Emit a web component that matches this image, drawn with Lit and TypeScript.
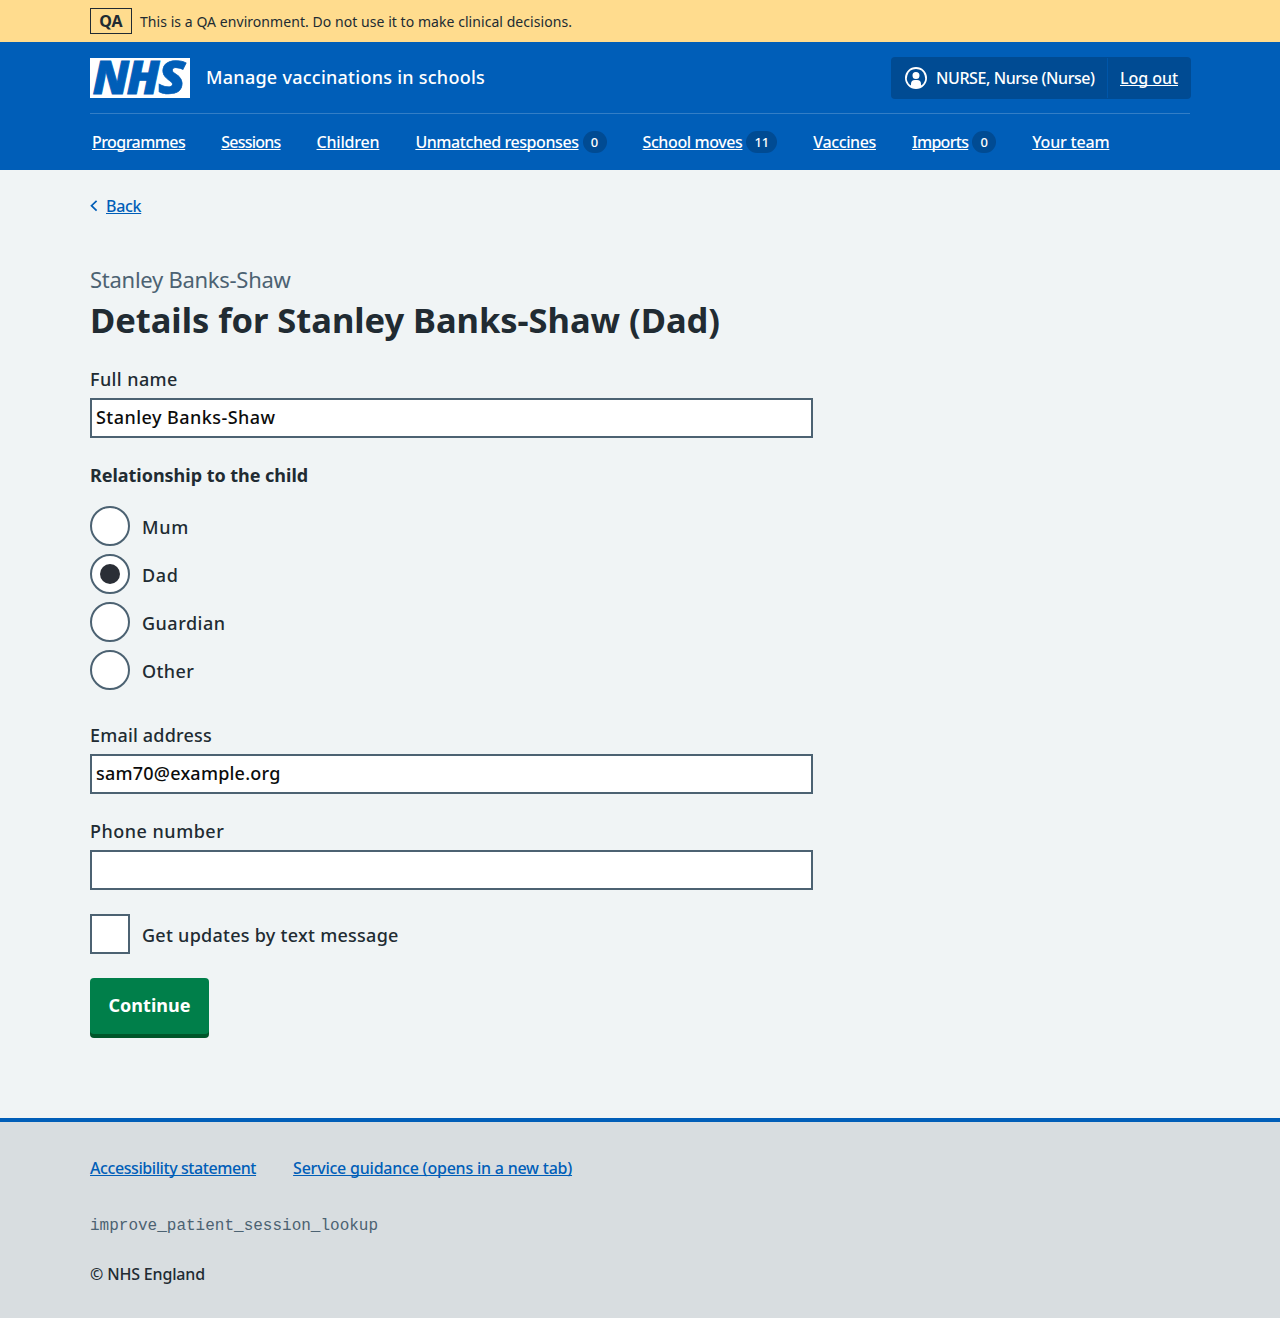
import { LitElement, html, css, nothing } from "lit";
import { customElement, property, state } from "lit/decorators.js";
import { styleMap } from "lit/directives/style-map.js";
import { classMap } from "lit/directives/class-map.js";

interface NavItem {
  label: string;
  tracking: number;
  count?: number;
}

interface Option {
  label: string;
  tracking: number;
}

const NAV: NavItem[] = [
  { label: "Programmes", tracking: -0.56 },
  { label: "Sessions", tracking: -0.76 },
  { label: "Children", tracking: -0.2 },
  { label: "Unmatched responses", tracking: -0.43, count: 0 },
  { label: "School moves", tracking: -0.4, count: 11 },
  { label: "Vaccines", tracking: -0.38 },
  { label: "Imports", tracking: -0.7, count: 0 },
  { label: "Your team", tracking: -0.2 },
];

const RELATIONSHIPS: Option[] = [
  { label: "Mum", tracking: 0.7 },
  { label: "Dad", tracking: 0.7 },
  { label: "Guardian", tracking: 0.5 },
  { label: "Other", tracking: 0.4 },
];

const spacing = (px: number) => styleMap({ letterSpacing: `${px}px` });

@customElement("app-banner")
class AppBanner extends LitElement {
  static styles = css`
    :host {
      display: block;
      background: #ffdc8e;
      color: #212b32;
    }
    .inner {
      box-sizing: border-box;
      width: 1100px;
      height: 42px;
      margin: 0 auto;
      display: flex;
      align-items: center;
      gap: 8px;
    }
    .tag {
      box-sizing: border-box;
      width: 42px;
      height: 26px;
      border: 1px solid #212b32;
      font-size: 16px;
      font-weight: 700;
      line-height: 24px;
      text-align: center;
    }
    .message {
      font-size: 14px;
      line-height: 24px;
      letter-spacing: 0.055px;
      padding-top: 2px;
    }
  `;
  render() {
    return html`<div class="inner">
      <strong class="tag">QA</strong>
      <span class="message">This is a QA environment. Do not use it to make clinical decisions.</span>
    </div>`;
  }
}

@customElement("app-header")
class AppHeader extends LitElement {
  static styles = css`
    :host {
      display: block;
      background: #005eb8;
      color: #fff;
      font-weight: 500;
    }
    .inner {
      width: 1100px;
      margin: 0 auto;
    }
    .top {
      height: 71px;
      display: flex;
      align-items: center;
      border-bottom: 1px solid #337ec6;
    }
    .logo {
      display: block;
      width: 100px;
      height: 40px;
      margin-top: 1px;
      overflow: visible;
    }
    .logo text {
      font-family: "Open Sans", "Noto Sans", sans-serif;
      font-weight: 800;
      font-style: italic;
      font-size: 46px;
    }
    .service {
      margin: -1px 0 0 16px;
      font-size: 18px;
      line-height: 28px;
      letter-spacing: 0.26px;
    }
    .account {
      box-sizing: border-box;
      display: flex;
      align-items: stretch;
      width: 300px;
      height: 42px;
      margin: 1px -1px 0 auto;
      padding: 1px 0;
      border-radius: 4px;
      background: #004b93;
      font-size: 16px;
      line-height: 40px;
      white-space: nowrap;
    }
    .user {
      box-sizing: border-box;
      width: 217px;
      display: flex;
      align-items: center;
      gap: 8px;
      padding-left: 13px;
      border-right: 1px solid #0056a9;
      letter-spacing: -0.42px;
    }
    .user svg {
      width: 24px;
      height: 24px;
    }
    a {
      color: inherit;
      text-decoration: underline 1px;
      text-underline-offset: 1px;
      text-decoration-skip-ink: none;
    }
    .logout {
      margin-left: 12px;
      letter-spacing: -0.05px;
    }
    nav {
      height: 56px;
      display: flex;
      align-items: center;
      gap: 36px;
      padding-left: 2px;
      font-size: 16px;
      line-height: 24px;
    }
    .item {
      display: flex;
      align-items: center;
      gap: 4px;
    }
    .count {
      box-sizing: border-box;
      min-width: 24px;
      height: 22px;
      padding: 0 8px;
      border-radius: 11px;
      background: #004b93;
      font-size: 13px;
      line-height: 23px;
      text-align: center;
    }
  `;
  render() {
    return html`<div class="inner">
      <div class="top">
        <svg class="logo" viewBox="0 0 100 40" role="img" fill="#005eb8" stroke="#005eb8">
          <rect width="100" height="40" fill="#fff" stroke="none" />
          <text x="2.8 36.8" y="36.1" stroke-width="0.9">NH</text>
          <text transform="translate(68 36.1) scale(1.1 1)" stroke-width="0.6">S</text>
        </svg>
        <span class="service">Manage vaccinations in schools</span>
        <div class="account">
          <div class="user">
            <svg viewBox="0 0 24 24" fill="#fff">
              <path
                d="M12 1a11 11 0 1 1 0 22 11 11 0 0 1 0-22Zm0 2a9 9 0 0 0-5 16.5V18a4 4 0 0 1 4-4h2a4 4 0 0 1 4 4v1.5A9 9 0 0 0 12 3Zm0 3a3.5 3.5 0 1 1-3.5 3.5A3.4 3.4 0 0 1 12 6Z"
              />
            </svg>
            <span>NURSE, Nurse (Nurse)</span>
          </div>
          <a class="logout">Log out</a>
        </div>
      </div>
      <nav>
        ${NAV.map(
          (n) => html`<div class="item">
            <a style=${spacing(n.tracking)}>${n.label}</a>${n.count === undefined
              ? nothing
              : html`<span class="count">${n.count}</span>`}
          </div>`,
        )}
      </nav>
    </div>`;
  }
}

@customElement("text-field")
class TextField extends LitElement {
  @property() label = "";
  @property() value = "";
  @property({ type: Number }) labelTracking = 0;
  @property({ type: Number }) valueTracking = 0;
  static styles = css`
    :host {
      display: block;
    }
    label {
      display: block;
      margin-bottom: 5px;
      line-height: 28px;
    }
    input {
      display: block;
      box-sizing: border-box;
      width: 723px;
      height: 40px;
      margin: 0;
      padding: 3px 4px 5px;
      border: 2px solid #4c6272;
      border-radius: 0;
      background: #fff;
      color: #0b0c0c;
      font: inherit;
    }
  `;
  render() {
    return html`<label style=${spacing(this.labelTracking)}>${this.label}</label>
      <input .value=${this.value} style=${spacing(this.valueTracking)} />`;
  }
}

@customElement("contact-form")
class ContactForm extends LitElement {
  @state() private selected = "Dad";
  static styles = css`
    :host {
      display: block;
      box-sizing: border-box;
      width: 1100px;
      height: 948px;
      margin: 0 auto;
      padding-top: 24px;
      color: #212b32;
      font-size: 18px;
      font-weight: 500;
    }
    .back {
      display: flex;
      align-items: center;
      gap: 8px;
      height: 24px;
      color: #005eb8;
      font-size: 16px;
      line-height: 24px;
      letter-spacing: -0.3px;
    }
    .back svg {
      width: 8px;
      height: 12px;
    }
    .back a {
      text-decoration: underline 1px;
      text-underline-offset: 1px;
      text-decoration-skip-ink: none;
    }
    h1 {
      margin: 48px 0 25px;
      font-size: 34.5px;
      font-weight: 700;
      line-height: 40px;
      letter-spacing: -0.03px;
    }
    .caption {
      display: block;
      margin-bottom: 7px;
      color: #4c6272;
      font-size: 22px;
      font-weight: 400;
      line-height: 27px;
      letter-spacing: -0.27px;
    }
    fieldset {
      margin: 23px 0 31px;
      padding: 0;
      border: 0;
    }
    legend {
      margin-bottom: 17px;
      padding: 0;
      font-weight: 700;
      line-height: 28px;
      letter-spacing: -0.03px;
    }
    .options {
      display: grid;
      gap: 8px;
    }
    .option {
      display: flex;
      align-items: center;
      gap: 12px;
      height: 40px;
    }
    .option span:last-child {
      padding-top: 2px;
      line-height: 28px;
    }
    .control {
      box-sizing: border-box;
      display: grid;
      place-items: center;
      width: 40px;
      height: 40px;
      border: 2px solid #4c6272;
      background: #fff;
    }
    .radio {
      border-radius: 50%;
    }
    .on::after {
      content: "";
      width: 20px;
      height: 20px;
      border-radius: 50%;
      background: #2a2e36;
    }
    .phone {
      margin-top: 23px;
    }
    .updates {
      margin: 24px 0;
      letter-spacing: 0.27px;
    }
    button {
      display: block;
      width: 119px;
      height: 56px;
      padding: 0 0 2px;
      border: 0;
      border-radius: 4px;
      background: #007f4a;
      box-shadow: 0 4px 0 #00562a;
      color: #fff;
      font: inherit;
      font-weight: 700;
    }
  `;
  render() {
    return html`
      <div class="back">
        <svg viewBox="0 0 8 12" fill="none" stroke="#005eb8" stroke-width="1.7">
          <path d="M6.6 0.8 1.5 5.7l5.1 4.9" />
        </svg>
        <a>Back</a>
      </div>
      <h1><span class="caption">Stanley Banks-Shaw</span>Details for Stanley Banks-Shaw (Dad)</h1>
      <text-field label="Full name" value="Stanley Banks-Shaw" labelTracking="0.4" valueTracking="0.45"></text-field>
      <fieldset>
        <legend>Relationship to the child</legend>
        <div class="options">
          ${RELATIONSHIPS.map(
            (o) => html`<div class="option" @click=${() => (this.selected = o.label)}>
              <span class=${classMap({ control: true, radio: true, on: o.label === this.selected })}></span>
              <span style=${spacing(o.tracking)}>${o.label}</span>
            </div>`,
          )}
        </div>
      </fieldset>
      <text-field label="Email address" value="sam70@example.org" labelTracking="0.18" valueTracking="0.22"></text-field>
      <text-field class="phone" label="Phone number" labelTracking="0.5"></text-field>
      <div class="option updates">
        <span class="control"></span>
        <span>Get updates by text message</span>
      </div>
      <button>Continue</button>
    `;
  }
}

@customElement("app-footer")
class AppFooter extends LitElement {
  static styles = css`
    :host {
      display: block;
      border-top: 4px solid #005eb8;
      background: #d8dde0;
      color: #212b32;
      font-size: 16px;
      font-weight: 500;
      line-height: 24px;
    }
    .inner {
      box-sizing: border-box;
      width: 1100px;
      height: 196px;
      margin: 0 auto;
      padding-top: 34px;
    }
    .links {
      display: flex;
      gap: 37px;
      color: #005eb8;
      letter-spacing: -0.42px;
    }
    a {
      text-decoration: underline 1px;
      text-underline-offset: 1px;
      text-decoration-skip-ink: none;
    }
    .guidance {
      letter-spacing: -0.22px;
    }
    code {
      display: block;
      margin: 34px 0 24px;
      color: #4c6272;
      font: 400 16px/24px "Liberation Mono", monospace;
    }
    .copyright {
      letter-spacing: -0.17px;
    }
  `;
  render() {
    return html`<div class="inner">
      <div class="links">
        <a>Accessibility statement</a>
        <a class="guidance">Service guidance (opens in a new tab)</a>
      </div>
      <code>improve_patient_session_lookup</code>
      <div class="copyright">© NHS England</div>
    </div>`;
  }
}

@customElement("app-root")
class AppRoot extends LitElement {
  static styles = css`
    :host {
      display: block;
      background: #f0f4f5;
      font-family: "Noto Sans", "Open Sans", sans-serif;
    }
  `;
  render() {
    return html`<app-banner></app-banner>
      <app-header></app-header>
      <contact-form></contact-form>
      <app-footer></app-footer>`;
  }
}
